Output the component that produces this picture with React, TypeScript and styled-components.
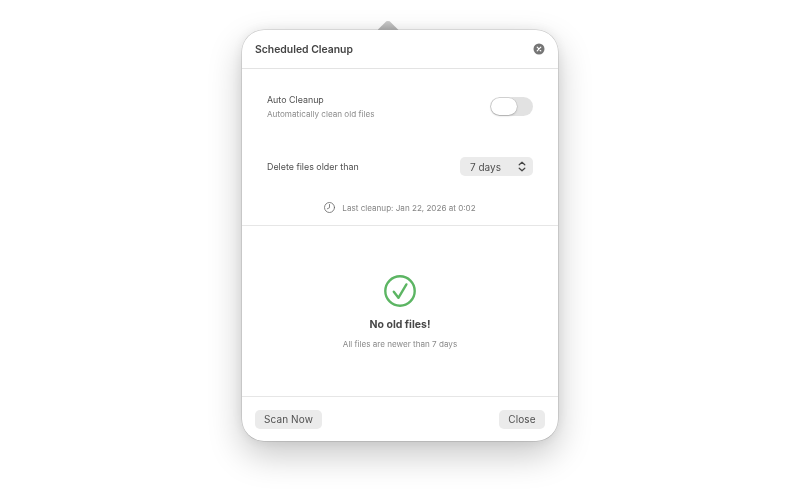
import React from "react";
import styled, { createGlobalStyle } from "styled-components";

const GlobalStyle = createGlobalStyle`
  html, body {
    margin: 0;
    padding: 0;
    width: 800px;
    height: 500px;
    overflow: hidden;
    background: #fff;
    font-family: Inter, "Liberation Sans", sans-serif;
    color: #3d3d3d;
  }
`;

const Stage = styled.div`
  width: 800px;
  height: 500px;
  padding-top: 21px;
  box-sizing: border-box;
  display: flex;
  flex-direction: column;
  align-items: center;
  filter: blur(0.35px);
`;

const Arrow = styled.div`
  width: 21px;
  height: 9px;
  margin-left: -24px;
  background: linear-gradient(#c8c8c8, #a2a2a2);
  clip-path: polygon(42% 4%, 50% 0, 58% 4%, 100% 100%, 0 100%);
  flex: none;
`;

const Popover = styled.div`
  width: 316px;
  height: 411px;
  box-sizing: border-box;
  flex: none;
  background: #fff;
  border-radius: 22px;
  box-shadow: 0 0 0 0.5px rgba(0, 0, 0, 0.2), 0 0 14px rgba(0, 0, 0, 0.08), 0 14px 34px rgba(0, 0, 0, 0.22);
  display: flex;
  flex-direction: column;
  overflow: hidden;
`;

const Header = styled.header`
  height: 39px;
  box-sizing: border-box;
  flex: none;
  padding: 0 13px;
  border-bottom: 1px solid #e3e3e3;
  display: flex;
  align-items: center;
  justify-content: space-between;
`;

const Title = styled.h1`
  margin: 0;
  font-size: 10.4px;
  font-weight: 600;
  color: #444;
`;

const CloseIcon = styled.button`
  width: 12px;
  height: 12px;
  padding: 0;
  border: none;
  background: none;
  display: block;
  svg {
    display: block;
  }
`;

const Settings = styled.section`
  height: 157px;
  box-sizing: border-box;
  flex: none;
  padding: 25px 25px 0;
  border-bottom: 1px solid #e6e6e6;
  display: flex;
  flex-direction: column;
`;

const Row = styled.div<{ $gap?: number }>`
  min-height: 19px;
  margin-top: ${(p) => p.$gap ?? 0}px;
  flex: none;
  display: flex;
  align-items: center;
  justify-content: space-between;
`;

const Labels = styled.div`
  display: flex;
  flex-direction: column;
  gap: 4px;
`;

const Label = styled.span`
  font-size: 8.9px;
  line-height: 11px;
  color: #505050;
`;

const Hint = styled.span`
  font-size: 8.15px;
  line-height: 11px;
  color: #8c8c8c;
`;

const Toggle = styled.div`
  width: 43px;
  height: 19px;
  margin-bottom: 2px;
  border-radius: 10px;
  background: #e2e2e2;
  display: flex;
  align-items: center;
`;

const Knob = styled.div`
  width: 26px;
  height: 17px;
  margin-left: 1px;
  box-sizing: border-box;
  border-radius: 9px;
  background: #fff;
  box-shadow: 0 0 0 0.5px rgba(0, 0, 0, 0.14), 0 1px 2px rgba(0, 0, 0, 0.18);
`;

const Select = styled.div`
  width: 73px;
  height: 19px;
  box-sizing: border-box;
  padding: 0 7px 0 10px;
  border-radius: 5px;
  background: #ebebeb;
  font-size: 10px;
  color: #505050;
  display: flex;
  align-items: center;
  justify-content: space-between;
`;

const LastCleanup = styled.div`
  margin-top: 26px;
  font-size: 8.1px;
  color: #858585;
  display: flex;
  align-items: center;
  justify-content: center;
  gap: 7px;
`;

const Empty = styled.section`
  flex: 1;
  display: flex;
  flex-direction: column;
  align-items: center;
  padding-top: 49px;
  box-sizing: border-box;
`;

const EmptyTitle = styled.div`
  margin-top: 11px;
  font-size: 10.5px;
  line-height: 13px;
  font-weight: 700;
  color: #484848;
`;

const EmptyHint = styled.div`
  margin-top: 8px;
  font-size: 8.1px;
  line-height: 11px;
  color: #8a8a8a;
`;

const Footer = styled.footer`
  height: 45px;
  box-sizing: border-box;
  flex: none;
  padding: 0 13px;
  border-top: 1px solid #e6e6e6;
  display: flex;
  align-items: center;
  justify-content: space-between;
`;

const Button = styled.button<{ $width: number }>`
  width: ${(p) => p.$width}px;
  height: 19px;
  padding: 0;
  border: none;
  border-radius: 5px;
  background: #ebebeb;
  font-family: inherit;
  font-size: 10px;
  letter-spacing: 0.1px;
  color: #505050;
`;

export default function App() {
  return (
    <>
      <GlobalStyle />
      <Stage>
        <Arrow />
        <Popover>
          <Header>
            <Title>Scheduled Cleanup</Title>
            <CloseIcon aria-label="Close">
              <svg width="12" height="12" viewBox="0 0 12 12">
                <circle cx="6" cy="6" r="5.5" fill="#757575" />
                <path d="M4.2 4.2l3.6 3.6M7.8 4.2L4.2 7.8" stroke="#fff" strokeWidth="1.2" strokeLinecap="round" />
              </svg>
            </CloseIcon>
          </Header>
          <Settings>
            <Row>
              <Labels>
                <Label>Auto Cleanup</Label>
                <Hint>Automatically clean old files</Hint>
              </Labels>
              <Toggle>
                <Knob />
              </Toggle>
            </Row>
            <Row $gap={37}>
              <Label>Delete files older than</Label>
              <Select>
                7 days
                <svg width="8" height="11" viewBox="0 0 8 11" fill="none" stroke="#444" strokeWidth="1.2" strokeLinecap="round" strokeLinejoin="round">
                  <path d="M1.2 3.8L4 1.2l2.8 2.6M1.2 7.2L4 9.8l2.8-2.6" />
                </svg>
              </Select>
            </Row>
            <LastCleanup>
              <svg width="11" height="11" viewBox="0 0 11 11" fill="none" stroke="#666" strokeWidth="0.8" strokeLinecap="round">
                <circle cx="5.5" cy="5.5" r="5" />
                <path d="M5.5 2.5v3.2L3.3 6.8" />
              </svg>
              Last cleanup: Jan 22, 2026 at 0:02
            </LastCleanup>
          </Settings>
          <Empty>
            <svg width="32" height="32" viewBox="0 0 32 32" fill="none" stroke="#5cb563" strokeLinecap="round" strokeLinejoin="round">
              <circle cx="16" cy="16" r="14.7" strokeWidth="2.4" />
              <path d="M9.8 16.8l4.6 6L22.4 9.4" strokeWidth="2.4" />
            </svg>
            <EmptyTitle>No old files!</EmptyTitle>
            <EmptyHint>All files are newer than 7 days</EmptyHint>
          </Empty>
          <Footer>
            <Button $width={67}>Scan Now</Button>
            <Button $width={46}>Close</Button>
          </Footer>
        </Popover>
      </Stage>
    </>
  );
}
